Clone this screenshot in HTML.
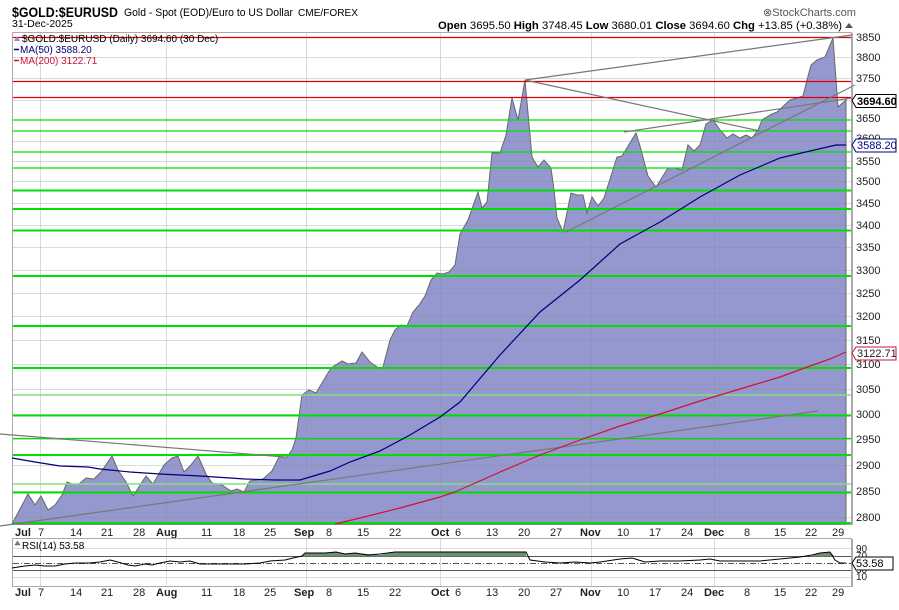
<!DOCTYPE html>
<html><head><meta charset="utf-8"><style>
body{margin:0;background:#fff;width:899px;height:610px;overflow:hidden;font-family:"Liberation Sans",sans-serif}
svg{display:block}
</style></head><body>
<svg width="899" height="610" viewBox="0 0 899 610" font-family="Liberation Sans, sans-serif">
<!-- header -->
<text x="12" y="17" font-size="14" font-weight="bold" fill="#000" textLength="106" lengthAdjust="spacingAndGlyphs">$GOLD:$EURUSD</text>
<text x="124" y="16" font-size="11" fill="#000" textLength="169" lengthAdjust="spacingAndGlyphs">Gold - Spot (EOD)/Euro to US Dollar</text>
<text x="298" y="16" font-size="10" fill="#000" textLength="60" lengthAdjust="spacingAndGlyphs">CME/FOREX</text>
<text x="12" y="27" font-size="10.5" fill="#000">31-Dec-2025</text>
<text x="763" y="16" font-size="11" fill="#555">⊗StockCharts.com</text>
<text x="438" y="29" font-size="11" fill="#000" textLength="404" lengthAdjust="spacingAndGlyphs"><tspan font-weight="bold">Open</tspan> 3695.50  <tspan font-weight="bold">High</tspan> 3748.45  <tspan font-weight="bold">Low</tspan> 3680.01  <tspan font-weight="bold">Close</tspan> 3694.60  <tspan font-weight="bold">Chg</tspan> +13.85 (+0.38%)</text>
<path d="M845 28 l4 -5 l4 5z" fill="#555"/>
<!-- frames -->
<rect x="12.5" y="32.5" width="839" height="492" fill="#fff" stroke="#aaa"/>
<!-- area -->
<path fill="#9598cf" stroke="#666" stroke-width="1" d="M12,524 L28,494 35,505 41,496 48,510 55,505 62,495 67,482 72,484 79,484 86,478 94,479 101,472 112,456 118,470 126,482 133,496 146,476 153,484 164,465 172,458 178,456 184,472 190,466 198,456 206,474 212,483 222,485 231,491 237,489 244,492 250,481 263,479 272,471 279,457 287,457 292,450 296,438 302,395 309,390 316,393 322,383 331,368 342,361 348,364 356,363 362,352 370,362 380,369 383,367 390,340 395,330 401,325 407,326 413,312 419,305 425,296 431,280 437,273 443,274 449,272 455,265 460,234 468,220 478,192 482,208 487,202 492,153 500,153 506,135 512,98 518,120 525,80 532,157 538,167 544,160 551,168 554,190 557,218 563,232 571,193 577,195 583,195 587,213 592,197 598,206 604,198 617,157 622,156 636,133 640,146 648,176 656,187 668,168 675,168 682,170 688,145 694,151 700,145 706,124 713,120 720,130 727,138 733,134 740,138 746,135 752,138 758,130 762,120 770,115 777,112 790,100 797,98 803,96 807,80 811,65 817,60 825,57 833,38 838,107 846,100 L846,524 Z"/>
<!-- grid -->
<g stroke="#888" stroke-opacity="0.3" stroke-width="1">
<path d="M40.5 33V524M166.5 33V524M306.5 33V524M440.5 33V524M591.5 33V524M714.5 33V524"/>
<path d="M13 57.5H851M13 78.5H851M13 100.5H851M13 141.5H851M13 161.5H851M13 181.5H851M13 203.5H851M13 225.5H851M13 247.5H851M13 270.5H851M13 293.5H851M13 316.5H851M13 340.5H851M13 364.5H851M13 389.5H851M13 414.5H851M13 439.5H851M13 465.5H851M13 491.5H851M13 517.5H851"/>
</g>
<!-- horizontal level lines -->
<g stroke="#e00000" stroke-width="1.3"><path d="M13 37.5H851M13 81.5H851M13 97.5H851"/></g>
<g stroke="#00e000">
<path stroke-width="1.3" d="M13 120H851M13 131H851M13 152H851M13 168H851M13 438.5H851"/>
<path stroke-width="2" d="M13 190.5H851M13 209H851M13 230.5H851M13 276H851M13 326H851M13 368H851M13 415.5H851M13 455H851M13 492.5H851M13 523H851"/>
<path stroke="#80e080" stroke-width="1.5" d="M13 395H851M13 484H851"/>
</g>
<!-- trendlines -->
<g stroke="#777" stroke-width="1.2" fill="none">
<path d="M0 526L818 411"/>
<path d="M0 434L285 457"/>
<path d="M525 80L852 35"/>
<path d="M525 80L760 131"/>
<path d="M566 232L855 85"/>
<path d="M624 132L852 98"/>
</g>
<!-- MAs -->
<polyline fill="none" stroke="#00007a" stroke-width="1.2" points="12,458 35,462 60,466 88,467 100,469 130,472 160,474 200,476 245,479 275,480 300,480 330,471 350,462 380,451 410,435 440,417 460,402 500,355 540,312 580,280 620,244 660,222 700,197 740,175 780,158 810,151 836,145 846,145"/>
<polyline fill="none" stroke="#d0103a" stroke-width="1.2" points="335,524 360,518 400,508 440,497 455,492 500,472 540,455 580,440 620,426 660,414 700,401 740,389 780,377 810,366 830,359 846,352"/>
<!-- legend -->
<path d="M14 41 l3 -5 l3 5z" fill="#8890c8"/>
<text x="22" y="42" font-size="10" fill="#000">$GOLD:$EURUSD (Daily) 3694.60 (30 Dec)</text>
<path d="M14 49.5h5" stroke="#00007a" stroke-width="1.5"/><text x="20" y="53" font-size="10" fill="#00007a">MA(50) 3588.20</text>
<path d="M14 60.5h5" stroke="#d0103a" stroke-width="1.5"/><text x="20" y="64" font-size="10" fill="#d0103a">MA(200) 3122.71</text>
<!-- right axis -->
<path d="M852.5 33V525" stroke="#aaa"/>
<g font-size="11" fill="#222">
<text x="856" y="41">3850</text><text x="856" y="61">3800</text><text x="856" y="82">3750</text>
<text x="856" y="122">3650</text><text x="856" y="142">3600</text><text x="856" y="165">3550</text><text x="856" y="185">3500</text>
<text x="856" y="207">3450</text><text x="856" y="229">3400</text><text x="856" y="251">3350</text><text x="856" y="274">3300</text>
<text x="856" y="297">3250</text><text x="856" y="320">3200</text><text x="856" y="344">3150</text><text x="856" y="368">3100</text>
<text x="856" y="393">3050</text><text x="856" y="418">3000</text><text x="856" y="443">2950</text><text x="856" y="469">2900</text>
<text x="856" y="495">2850</text><text x="856" y="521">2800</text>
</g>
<path d="M852 100.5l4-6h40v13h-40z" fill="#fff" stroke="#000"/><text x="857" y="105" font-size="11" font-weight="bold">3694.60</text>
<path d="M852 145l4-6h40v13h-40z" fill="#fff" stroke="#00007a"/><text x="857" y="149" font-size="11" fill="#00007a">3588.20</text>
<path d="M852 353l4-6h40v13h-40z" fill="#fff" stroke="#d0103a"/><text x="857" y="357" font-size="11" fill="#222">3122.71</text>
<!-- x axis labels -->
<g font-size="11" fill="#222">
<text x="15" y="536" font-weight="bold">Jul</text><text x="38" y="536">7</text><text x="70" y="536">14</text><text x="101" y="536">21</text><text x="133" y="536">28</text>
<text x="156" y="536" font-weight="bold">Aug</text><text x="201" y="536">11</text><text x="233" y="536">18</text><text x="264" y="536">25</text>
<text x="294" y="536" font-weight="bold">Sep</text><text x="326" y="536">8</text><text x="357" y="536">15</text><text x="389" y="536">22</text>
<text x="431" y="536" font-weight="bold">Oct</text><text x="455" y="536">6</text><text x="486" y="536">13</text><text x="518" y="536">20</text><text x="550" y="536">27</text>
<text x="580" y="536" font-weight="bold">Nov</text><text x="617" y="536">10</text><text x="649" y="536">17</text><text x="681" y="536">24</text>
<text x="704" y="536" font-weight="bold">Dec</text><text x="744" y="536">8</text><text x="774" y="536">15</text><text x="805" y="536">22</text><text x="832" y="536">29</text>
</g>
<!-- RSI panel -->
<rect x="12.5" y="538.5" width="839" height="48" fill="#fff" stroke="#aaa"/>
<g stroke="#888" stroke-opacity="0.3"><path d="M40.5 539V586M166.5 539V586M306.5 539V586M440.5 539V586M591.5 539V586M714.5 539V586M13 548.5H851M13 577.5H851"/></g>
<path d="M13 556.5H851M13 570.5H851" stroke="#555"/>
<path d="M13 563.5H851" stroke="#555" stroke-dasharray="6,2,1,2"/>
<path fill="#6f9070" d="M302 556.5 L305 553 325 553 336 552 345 554 355 553 380 555 395 552 420 552 440 552 460 552 500 552 520 552 526 552 526 556.5 Z M810 556.5 L820 553 830 552 835 556.5Z"/>
<polyline fill="none" stroke="#000" stroke-width="1" points="12,568 25,566 35,565 45,566 55,566 65,564 75,563 90,563 100,562 110,560 118,562 128,565 135,566 145,564 152,565 160,563 170,561 180,562 190,561 200,564 210,564 230,564 245,564 260,563 270,561 285,560 293,558 302,556 305,553 325,553 336,552 345,554 355,553 368,555 380,554 395,552 420,552 440,552 460,552 500,552 520,552 526,552 530,560 545,562 560,563 575,562 590,563 600,562 620,559 632,558 645,562 660,561 680,561 700,560 710,559 720,561 740,561 760,561 780,559 800,557 812,555 820,553 830,552 835,560 840,563 846,563"/>
<path d="M15 545l2.5-4 2.5 4z" fill="#6f9070" stroke="#444" stroke-width="0.5"/>
<text x="22" y="549" font-size="10" fill="#000">RSI(14) 53.58</text>
<path d="M852.5 539V587" stroke="#aaa"/>
<g font-size="10" fill="#222"><text x="856" y="552">90</text><text x="856" y="559">70</text><text x="856" y="573">30</text><text x="856" y="580">10</text></g>
<path d="M852 563l4-6h37v13h-37z" fill="#fff" stroke="#000"/><text x="856" y="567" font-size="11">53.58</text>
<g transform="translate(0,60)" font-size="11" fill="#222">
<text x="15" y="536" font-weight="bold">Jul</text><text x="38" y="536">7</text><text x="70" y="536">14</text><text x="101" y="536">21</text><text x="133" y="536">28</text>
<text x="156" y="536" font-weight="bold">Aug</text><text x="201" y="536">11</text><text x="233" y="536">18</text><text x="264" y="536">25</text>
<text x="294" y="536" font-weight="bold">Sep</text><text x="326" y="536">8</text><text x="357" y="536">15</text><text x="389" y="536">22</text>
<text x="431" y="536" font-weight="bold">Oct</text><text x="455" y="536">6</text><text x="486" y="536">13</text><text x="518" y="536">20</text><text x="550" y="536">27</text>
<text x="580" y="536" font-weight="bold">Nov</text><text x="617" y="536">10</text><text x="649" y="536">17</text><text x="681" y="536">24</text>
<text x="704" y="536" font-weight="bold">Dec</text><text x="744" y="536">8</text><text x="774" y="536">15</text><text x="805" y="536">22</text><text x="832" y="536">29</text>
</g>
</svg>
</body></html>
